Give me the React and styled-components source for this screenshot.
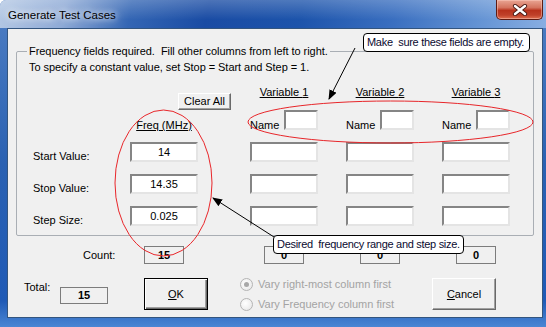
import React from 'react';
import styled, { createGlobalStyle } from 'styled-components';

const GlobalStyle = createGlobalStyle`
  html, body {
    margin: 0;
    padding: 0;
    background: #ffffff;
  }
  body {
    font-family: "Liberation Sans", Arial, sans-serif;
  }
`;

const FIELD_ROWS = [
  { label: 'Start Value:', freq: '14' },
  { label: 'Stop Value:', freq: '14.35' },
  { label: 'Step Size:', freq: '0.025' },
];

const VAR_COLS = [4, 6, 8];
const GRID_COLS = '97px 68px 52px 68px 28px 68px 28px 68px';

const App = () => {
  return (
    <>
      <GlobalStyle />
      <Window>
        <TitleBar>
          <Title>Generate Test Cases</Title>
          <CloseButton>
            <svg width="16" height="12" viewBox="0 0 16 12">
              <path d="M3 2 L13 10 M13 2 L3 10" stroke="#4a1a14" strokeWidth="4.2" strokeLinecap="round" />
              <path d="M3 2 L13 10 M13 2 L3 10" stroke="#ffffff" strokeWidth="2.4" strokeLinecap="round" />
            </svg>
          </CloseButton>
        </TitleBar>

        <Frame>
          <Client>
            <Group>
              <Legend>Frequency fields required.&nbsp; Fill other columns from left to right.</Legend>
              <Hint>To specify a constant value, set Stop = Start and Step = 1.</Hint>
              <FieldGrid>
                <ClearButton>Clear All</ClearButton>
                {VAR_COLS.map((col, i) => (
                  <ColHeader key={col} $col={col}>Variable {i + 1}</ColHeader>
                ))}

                <FreqHeader>Freq (MHz)</FreqHeader>
                {VAR_COLS.map((col) => (
                  <NameCell key={col} $col={col}>
                    <NameLabel>Name</NameLabel>
                    <NameBox readOnly value="" />
                  </NameCell>
                ))}

                {FIELD_ROWS.map((row, r) => (
                  <React.Fragment key={row.label}>
                    <RowLabel $row={r + 3}>{row.label}</RowLabel>
                    <ValueBox $col={2} $row={r + 3} readOnly value={row.freq} />
                    {VAR_COLS.map((col) => (
                      <ValueBox key={col} $col={col} $row={r + 3} readOnly value="" />
                    ))}
                  </React.Fragment>
                ))}
              </FieldGrid>
            </Group>

            <CountRow>
              <CountLabel>Count:</CountLabel>
              <CountBox $col={2}>15</CountBox>
              {VAR_COLS.map((col) => (
                <CountBox key={col} $col={col}>0</CountBox>
              ))}
            </CountRow>

            <BottomRow>
              <TotalLabel>Total:</TotalLabel>
              <TotalBox>15</TotalBox>
              <PushButton $default>
                <u>O</u>K
              </PushButton>
              <RadioGroup>
                <RadioRow>
                  <RadioDot $checked />
                  Vary right-most column first
                </RadioRow>
                <RadioRow>
                  <RadioDot />
                  Vary Frequency column first
                </RadioRow>
              </RadioGroup>
              <PushButton $right>
                <u>C</u>ancel
              </PushButton>
            </BottomRow>
          </Client>
        </Frame>

        <Overlay width="546" height="327" viewBox="0 0 546 327">
          <defs>
            <marker id="head" markerWidth="10" markerHeight="8" refX="9" refY="4" orient="auto" markerUnits="userSpaceOnUse">
              <path d="M0 0 L10 4 L0 8 Z" fill="#000" />
            </marker>
          </defs>
          <ellipse cx="163.5" cy="183" rx="48.5" ry="73" fill="none" stroke="#e8262a" strokeWidth="1" />
          <ellipse cx="390.5" cy="122" rx="142.5" ry="21" fill="none" stroke="#e8262a" strokeWidth="1" />
          <line x1="355" y1="48" x2="329" y2="99" stroke="#000" strokeWidth="1" markerEnd="url(#head)" />
          <line x1="274" y1="237" x2="213" y2="198" stroke="#000" strokeWidth="1" markerEnd="url(#head)" />
        </Overlay>

        <Callout $left={363} $top={33} $width={167}>
          Make&nbsp; sure these fields are empty.
        </Callout>
        <Callout $left={273} $top={235} $width={191}>
          Desired&nbsp; frequency range and step size.
        </Callout>
      </Window>
    </>
  );
};

const Window = styled.div`
  position: relative;
  width: 546px;
  height: 327px;
  display: flex;
  flex-direction: column;
  overflow: hidden;
  border-radius: 6px 0 0 0;
  background: linear-gradient(180deg, #4f7fc4 0%, #2a61b2 50%, #1f5ab6 92%, #4a86d4 100%);
`;

const TitleBar = styled.div`
  height: 28px;
  flex: none;
  display: flex;
  align-items: flex-start;
  justify-content: space-between;
  padding-left: 8px;
  background:
    linear-gradient(180deg, rgba(255, 255, 255, 0.22), rgba(255, 255, 255, 0) 70%),
    linear-gradient(100deg, #b4c8e4 0%, #8eaad6 12%, #3466b4 24%, #1a4ca4 38%, #1d54ab 55%, #3a6fc0 72%, #6594d4 88%, #88aee2 100%);
`;

const Title = styled.span`
  margin-top: 8px;
  font-size: 11.5px;
  line-height: 14px;
  color: #000;
  text-shadow: 0 0 6px rgba(255, 255, 255, 0.95), 0 0 10px rgba(255, 255, 255, 0.8);
`;

const CloseButton = styled.div`
  width: 45px;
  height: 19px;
  margin-right: 3px;
  display: flex;
  align-items: center;
  justify-content: center;
  border: 1px solid #5e1b12;
  border-top: none;
  border-radius: 0 0 5px 5px;
  background: linear-gradient(180deg, #e9a593 0%, #d4735e 40%, #b8321c 55%, #c0412a 80%, #e07050 100%);
  box-shadow: inset 0 0 0 1px rgba(255, 210, 200, 0.45);
`;

const Frame = styled.div`
  flex: 1;
  display: flex;
  padding: 0 3px 9px 7px;
`;

const Client = styled.div`
  flex: 1;
  display: flex;
  flex-direction: column;
  border: 1px solid #33557f;
  background: #f0f0f0;
  color: #000;
  font-size: 11px;
  line-height: 13px;
`;

const Group = styled.fieldset`
  margin: 16px 8px 0 8px;
  padding: 0 16px 9px 16px;
  border: 1px solid #a9aeb4;
  border-radius: 2px;
  min-width: 0;
`;

const Legend = styled.legend`
  margin-left: -6px;
  padding: 0 2px;
  font-size: 11px;
  line-height: 13px;
  letter-spacing: -0.05px;
`;

const Hint = styled.div`
  margin: 3px 0 0 -4px;
  letter-spacing: -0.05px;
`;

const FieldGrid = styled.div`
  display: grid;
  grid-template-columns: ${GRID_COLS};
  grid-template-rows: 24px 32px 32px 32px 20px;
  margin-top: 12px;
`;

const ClearButton = styled.button`
  grid-column: 2 / 4;
  grid-row: 1;
  justify-self: start;
  align-self: end;
  margin-left: 48px;
  width: 53px;
  height: 17px;
  padding: 0;
  font: inherit;
  color: #000;
  background: #f0f0f0;
  border: 1px solid;
  border-color: #ffffff #6a6a6a #6a6a6a #ffffff;
  box-shadow: inset -1px -1px #a0a0a0;
`;

const ColHeader = styled.div`
  grid-column: ${(p) => p.$col};
  grid-row: 1;
  justify-self: center;
  align-self: start;
  white-space: nowrap;
  text-decoration: underline;
`;

const FreqHeader = styled.div`
  grid-column: 2;
  grid-row: 2;
  justify-self: center;
  padding-top: 9px;
  text-decoration: underline;
  white-space: nowrap;
`;

const NameCell = styled.div`
  grid-column: ${(p) => p.$col};
  grid-row: 2;
  height: 20px;
  display: flex;
  align-items: flex-end;
  justify-content: space-between;
`;

const NameLabel = styled.span`
  margin-bottom: -2px;
`;

const sunken = `
  box-sizing: border-box;
  padding: 0;
  border: 2px solid;
  border-color: #858585 #e4e4e4 #e4e4e4 #858585;
  background: #ffffff;
  font-family: "Liberation Sans", Arial, sans-serif;
  font-size: 11px;
  color: #000;
  outline: none;
`;

const NameBox = styled.input`
  ${sunken}
  width: 34px;
  height: 20px;
`;

const RowLabel = styled.div`
  grid-column: 1;
  grid-row: ${(p) => p.$row};
  padding-top: 8px;
  white-space: nowrap;
`;

const ValueBox = styled.input`
  ${sunken}
  grid-column: ${(p) => p.$col};
  grid-row: ${(p) => p.$row};
  width: 68px;
  height: 20px;
  text-align: center;
`;

const CountRow = styled.div`
  display: grid;
  grid-template-columns: ${GRID_COLS};
  margin: 10px 0 0 25px;
  height: 18px;
`;

const CountLabel = styled.div`
  grid-column: 1;
  padding-left: 50px;
  line-height: 18px;
`;

const CountBox = styled.div`
  grid-column: ${(p) => p.$col};
  justify-self: center;
  box-sizing: border-box;
  width: 40px;
  height: 18px;
  border: 1px solid #7c7c7c;
  text-align: center;
  font-weight: bold;
  line-height: 16px;
`;

const BottomRow = styled.div`
  display: flex;
  align-items: flex-start;
  margin-top: 14px;
  padding: 0 46px 0 16px;
`;

const TotalLabel = styled.span`
  width: 36px;
  margin-top: 3px;
`;

const TotalBox = styled.div`
  box-sizing: border-box;
  width: 48px;
  height: 17px;
  margin-top: 9px;
  border: 1px solid #7c7c7c;
  text-align: center;
  font-weight: bold;
  line-height: 15px;
`;

const PushButton = styled.button`
  box-sizing: border-box;
  width: 64px;
  height: 32px;
  margin-left: ${(p) => (p.$right ? 'auto' : '36px')};
  padding: 0;
  font: inherit;
  color: #000;
  background: #f0f0f0;
  border: 1px solid;
  border-color: ${(p) => (p.$default ? '#000' : '#ffffff #696969 #696969 #ffffff')};
  box-shadow: ${(p) =>
    p.$default
      ? 'inset 1px 1px #ffffff, inset -1px -1px #696969, inset -2px -2px #a0a0a0'
      : 'inset -1px -1px #a0a0a0'};
  u {
    text-decoration: underline;
  }
`;

const RadioGroup = styled.div`
  display: flex;
  flex-direction: column;
  gap: 7px;
  margin-left: 32px;
  color: #a3a3a3;
`;

const RadioRow = styled.div`
  display: flex;
  align-items: center;
  gap: 5px;
  height: 13px;
  white-space: nowrap;
`;

const RadioDot = styled.span`
  position: relative;
  box-sizing: border-box;
  width: 13px;
  height: 13px;
  border-radius: 50%;
  border: 1px solid #b4b4b4;
  background: radial-gradient(circle at 40% 40%, #ffffff 0%, #ececec 70%, #dcdcdc 100%);

  &::after {
    content: '';
    display: ${(p) => (p.$checked ? 'block' : 'none')};
    position: absolute;
    left: 3px;
    top: 3px;
    width: 5px;
    height: 5px;
    border-radius: 50%;
    background: #a8a8a8;
  }
`;

const Overlay = styled.svg`
  position: absolute;
  left: 0;
  top: 0;
  pointer-events: none;
`;

const Callout = styled.div`
  position: absolute;
  left: ${(p) => p.$left}px;
  top: ${(p) => p.$top}px;
  width: ${(p) => p.$width}px;
  height: 19px;
  box-sizing: border-box;
  padding: 0 0 0 3px;
  border: 1px solid #000;
  border-radius: 4px;
  background: #ffffff;
  color: #0a0a30;
  font-size: 11px;
  line-height: 17px;
  letter-spacing: -0.3px;
  white-space: nowrap;
  overflow: hidden;
`;

export default App;
